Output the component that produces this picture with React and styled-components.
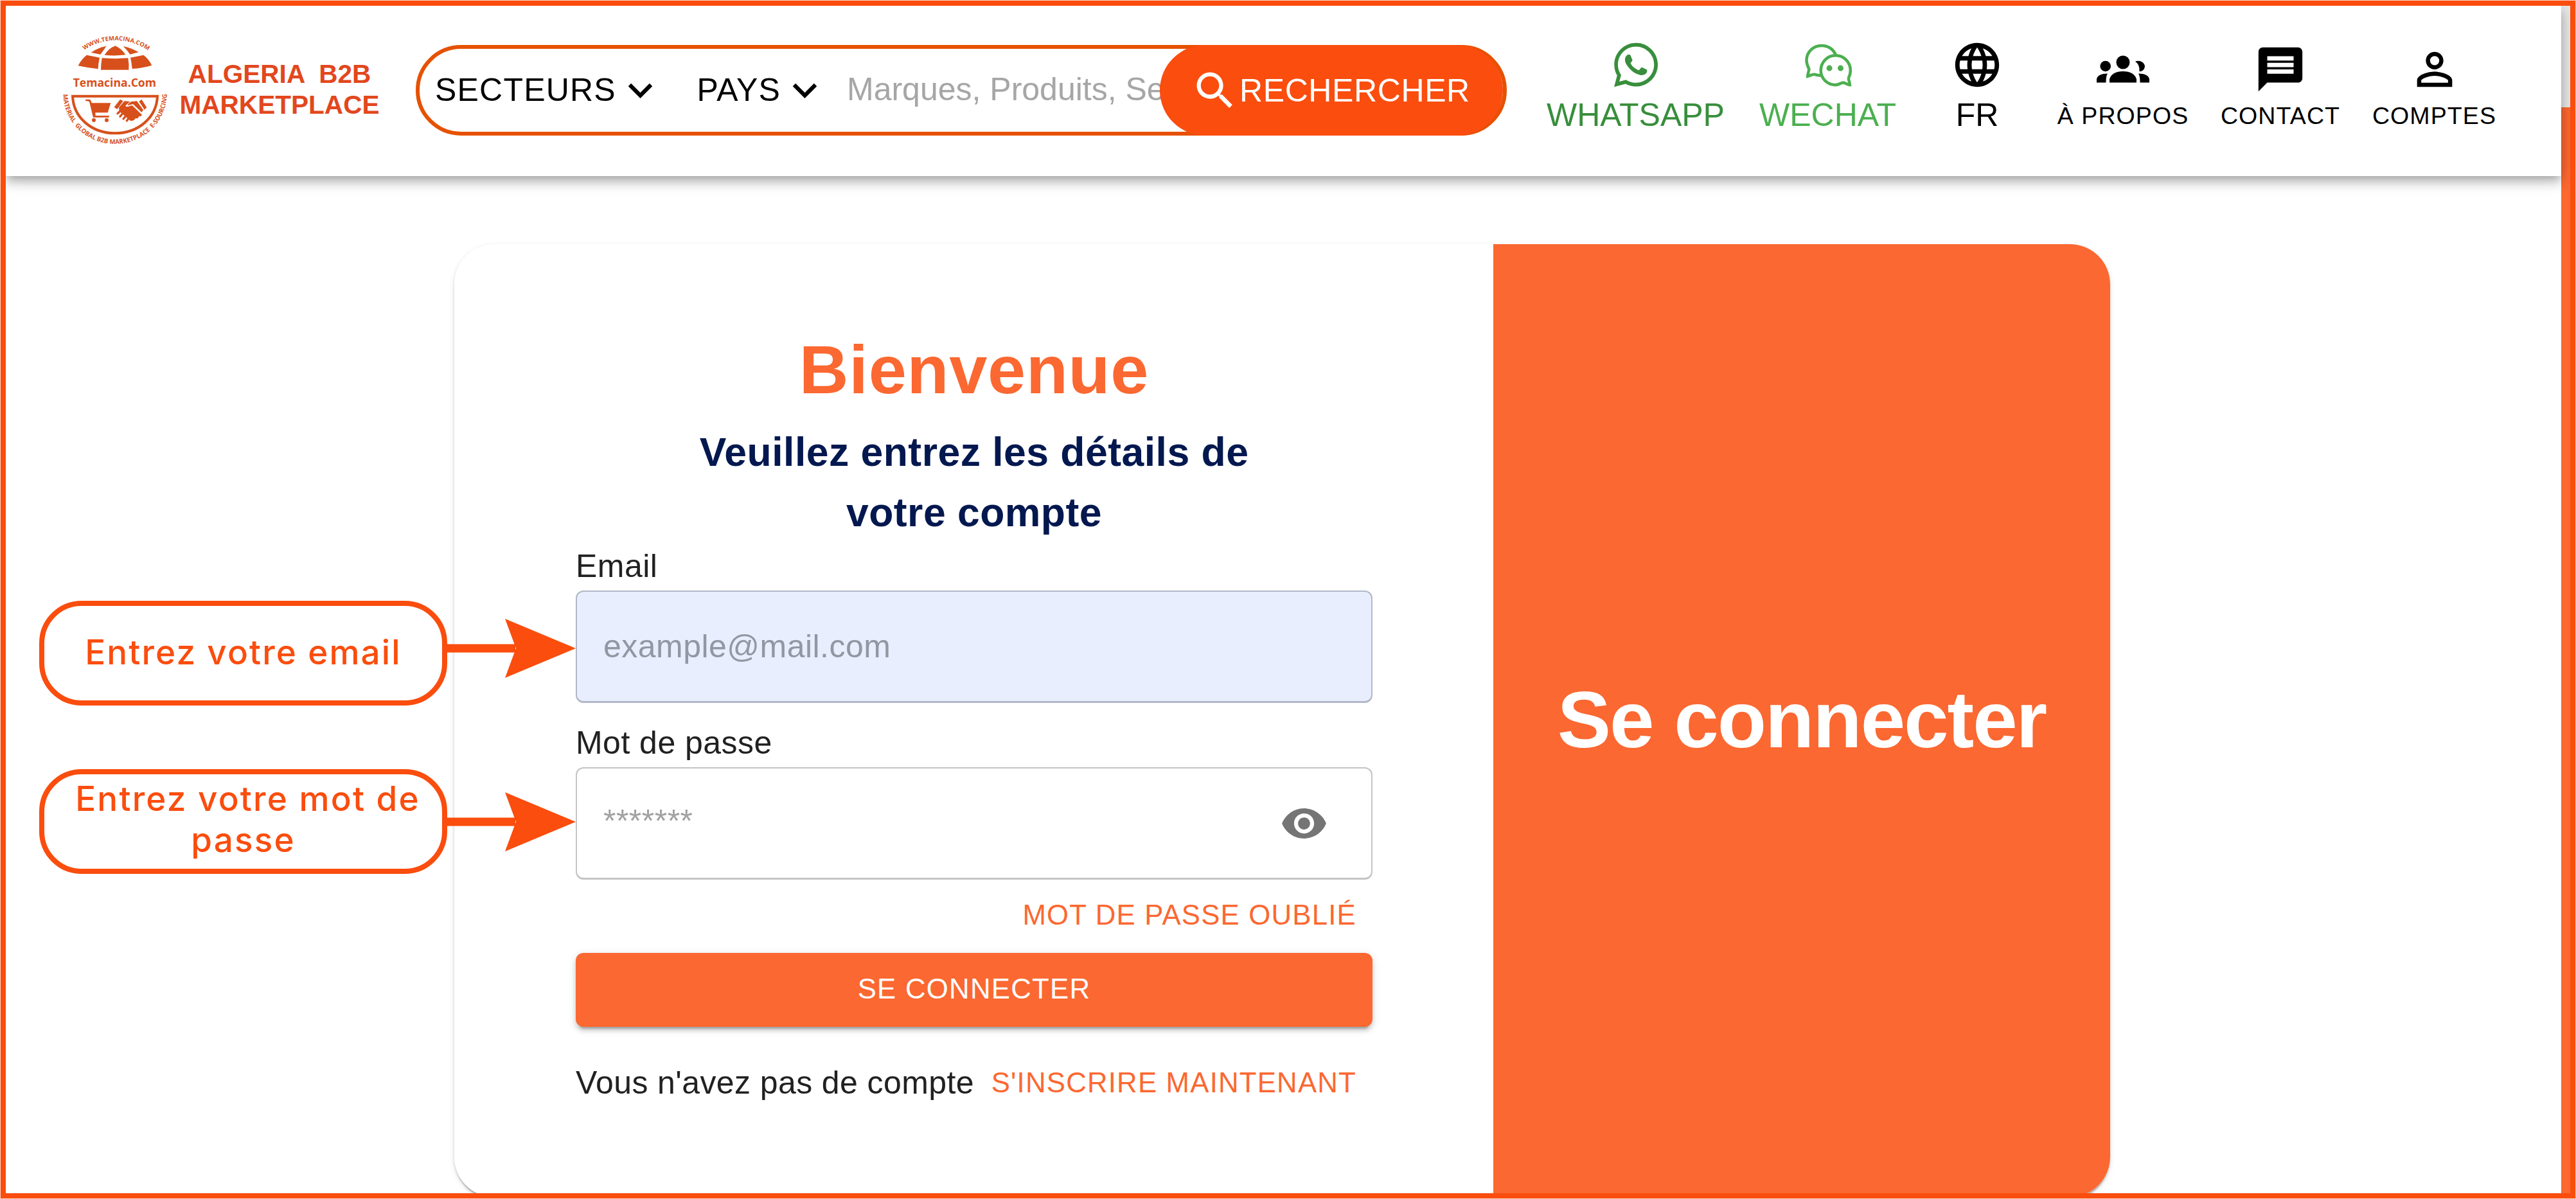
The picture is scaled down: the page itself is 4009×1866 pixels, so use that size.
import React from "react";
import styled, { createGlobalStyle } from "styled-components";
import {
  MdKeyboardArrowDown,
  MdSearch,
  MdWhatsapp,
  MdLanguage,
  MdMessage,
  MdPersonOutline,
  MdVisibility,
} from "react-icons/md";

const ACCENT = "#fa4d0e";
const ORANGE = "#fb6831";
const LOGO = "#d7501b";

const GlobalStyle = createGlobalStyle`
  *, *::before, *::after { box-sizing: border-box; }
  html, body { margin: 0; padding: 0; overflow: hidden; }
  body { font-family: "Liberation Sans", Arial, sans-serif; background: #fff; }
  button, input { font-family: inherit; margin: 0; }
  svg { display: block; flex: none; }
`;

const Page = styled.div`
  width: 4009px;
  height: 1866px;
  padding: 1px;
  background: #fdd5c6;
`;

const Frame = styled.div`
  display: flex;
  width: 4007px;
  height: 1864px;
  border: 8px solid ${ACCENT};
  background: #fff;
  overflow: hidden;
`;

const Main = styled.main`
  position: relative;
  display: flex;
  flex-direction: column;
  width: 3977px;
  height: 1848px;
`;

const ScrollTrack = styled.div`
  width: 14px;
  padding-top: 158px;
  background: #e6e6e6;
`;

const ScrollThumb = styled.div`
  height: 1690px;
  background: ${ORANGE};
`;

const Header = styled.header`
  position: relative;
  display: flex;
  align-items: center;
  flex: none;
  height: 265px;
  background: #fff;
  box-shadow:
    0 6px 12px -3px rgba(0, 0, 0, 0.2),
    0 12px 15px 0 rgba(0, 0, 0, 0.14),
    0 3px 31px 0 rgba(0, 0, 0, 0.12);
`;

const Brand = styled.a`
  display: flex;
  align-items: center;
  width: 638px;
  padding: 0 0 3px 86px;
`;

const BrandName = styled.span`
  display: flex;
  flex-direction: column;
  align-items: center;
  width: 330px;
  margin-left: 5px;
  padding-bottom: 2px;
  font-size: 40.6px;
  line-height: 48.5px;
  font-weight: 700;
  white-space: pre;
  color: #e2471d;
`;

const SearchBar = styled.div`
  display: flex;
  align-items: center;
  width: 1698px;
  height: 141px;
  margin-top: -2px;
  border: 6px solid #e65100;
  border-radius: 71px;
  background: #fff;
`;

const Filter = styled.button`
  display: flex;
  align-items: center;
  width: ${(p) => p.$w}px;
  padding: 0 0 0 24px;
  border: 0;
  background: none;
  font-size: 50px;
  line-height: 75px;
  letter-spacing: 1.2px;
  color: #000;
`;

const Query = styled.input`
  width: 500px;
  height: 75px;
  padding: 0 0 3px;
  border: 0;
  outline: 0;
  font-size: 50px;
  background: none;

  &::placeholder {
    color: #a6a6a6;
    opacity: 1;
  }
`;

const SearchButton = styled.button`
  position: relative;
  display: flex;
  align-items: center;
  flex: none;
  width: 534px;
  height: 141px;
  margin-left: -13px;
  padding: 0 0 0 48px;
  border: 0;
  border-radius: 71px;
  background: ${ACCENT};
  font-size: 50px;
  letter-spacing: 0.6px;
  color: #fff;
`;

const Nav = styled.nav`
  display: flex;
  align-items: center;
  margin-left: 34px;
  padding-bottom: 6px;
`;

const NavItem = styled.a`
  display: flex;
  flex-direction: column;
  align-items: center;
  width: ${(p) => p.$w}px;
  font-size: ${(p) => (p.$small ? 37.5 : 50)}px;
  line-height: ${(p) => (p.$small ? 62 : 75)}px;
  letter-spacing: ${(p) => p.$track || 0}px;
  white-space: nowrap;
  color: ${(p) => p.$color || "#000"};
`;

const Card = styled.section`
  display: flex;
  width: 2577px;
  height: 1483px;
  border-radius: 62.5px;
  overflow: hidden;
  background: #fff;
`;

const CardShadow = styled.div`
  flex: none;
  width: 2577px;
  height: 1483px;
  margin: 106px 0 0 698px;
  border-radius: 62.5px;
  box-shadow:
    0 6px 3px -3px rgba(0, 0, 0, 0.2),
    0 3px 3px 0 rgba(0, 0, 0, 0.14),
    0 3px 9px 0 rgba(0, 0, 0, 0.12);
`;

const FormPane = styled.form`
  display: flex;
  flex-direction: column;
  width: 1617px;
  padding: 130px 188px 0 189px;
`;

const Welcome = styled.h1`
  margin: 0 0 15px;
  text-align: center;
  font-size: 106.25px;
  line-height: 131px;
  letter-spacing: 0.78px;
  color: ${ORANGE};
`;

const Intro = styled.h2`
  width: 900px;
  margin: 0 auto;
  text-align: center;
  font-size: 62.5px;
  line-height: 94px;
  letter-spacing: 0.47px;
  color: #03184f;
`;

const Label = styled.label`
  height: 75px;
  margin-top: ${(p) => p.$gap || 0}px;
  font-size: 50px;
  line-height: 75px;
  letter-spacing: 0.47px;
  color: #212121;
`;

const Field = styled.div`
  display: flex;
  align-items: center;
  height: 175px;
  padding: 0 67px 0 41px;
  border: 2px solid ${(p) => (p.$filled ? "#b1b8c6" : "#c4c4c4")};
  border-bottom-width: 3px;
  border-radius: 12px;
  background: ${(p) => (p.$filled ? "#e8eefd" : "#fff")};
`;

const Input = styled.input`
  flex: 1;
  min-width: 0;
  height: 75px;
  padding: 0 0 ${(p) => p.$lift || 0}px;
  border: 0;
  outline: 0;
  background: none;
  font-size: 50px;
  letter-spacing: 0.47px;

  &::placeholder {
    color: ${(p) => p.$hint};
    opacity: 1;
  }
`;

const TextLink = styled.a`
  padding-right: 25px;
  font-size: 43.75px;
  line-height: 76px;
  letter-spacing: 1.2px;
  white-space: nowrap;
  color: ${ORANGE};
`;

const ForgotRow = styled.div`
  display: flex;
  justify-content: flex-end;
  height: 114px;
  padding-top: 17px;
`;

const Submit = styled.button`
  height: 115px;
  padding: 0 0 3px;
  border: 0;
  border-radius: 12px;
  background: ${ORANGE};
  box-shadow:
    0 9px 3px -6px rgba(0, 0, 0, 0.2),
    0 6px 6px 0 rgba(0, 0, 0, 0.14),
    0 3px 15px 0 rgba(0, 0, 0, 0.12);
  font-size: 43.75px;
  letter-spacing: 1.25px;
  color: #fff;
`;

const SignupRow = styled.div`
  display: flex;
  align-items: center;
  justify-content: space-between;
  margin-top: 49px;
`;

const SignupText = styled.span`
  font-size: 50px;
  line-height: 76px;
  letter-spacing: 0.4px;
  white-space: nowrap;
  color: #212121;
`;

const SidePane = styled.aside`
  display: flex;
  justify-content: center;
  width: 960px;
  padding-top: 667px;
  background: ${ORANGE};
`;

const SideTitle = styled.h2`
  margin: 0;
  font-size: 125px;
  line-height: 146px;
  letter-spacing: -2.05px;
  white-space: nowrap;
  color: #fff;
`;

const Callout = styled.div`
  position: absolute;
  left: 52px;
  top: ${(p) => p.$top}px;
  display: flex;
  align-items: flex-start;
`;

const Bubble = styled.div`
  display: flex;
  align-items: center;
  justify-content: center;
  width: 635px;
  height: 163px;
  padding-bottom: ${(p) => p.$lift}px;
  border: 8px solid ${ACCENT};
  border-radius: 66px;
  background: #fff;
  font-family: Inter, "Liberation Sans", sans-serif;
  font-size: 53px;
  font-weight: 500;
  line-height: 64px;
  letter-spacing: ${(p) => p.$track}px;
  white-space: nowrap;
  text-align: center;
  text-indent: ${(p) => p.$indent || 0}px;
  color: ${ACCENT};
`;

const Arrow = styled.svg`
  margin: ${(p) => p.$drop}px 0 0 -1px;
  fill: ${ACCENT};
`;

function Logo() {
  return (
    <svg width="170" height="180" viewBox="0 0 510 540" fill={LOGO}>
      <defs>
        <path id="logo-top" d="M108 84 A262 262 0 0 1 410 88" />
        <path id="logo-bottom" d="M10 290 A242 234 0 0 0 494 286" />
      </defs>
      <g fontFamily="Open Sans, sans-serif" fontWeight="700">
        <text fontSize="28" textLength="318" lengthAdjust="spacingAndGlyphs">
          <textPath href="#logo-top">WWW.TEMACINA.COM</textPath>
        </text>
        <text x="56" y="256" fontSize="53" textLength="388" lengthAdjust="spacingAndGlyphs">
          Temacina.Com
        </text>
        <text fontSize="30" xmlSpace="preserve" textLength="744" lengthAdjust="spacingAndGlyphs">
          <textPath href="#logo-bottom">{"MATERIAL \u00a0GLOBAL B2B MARKETPLACE \u00a0E-SOURCING"}</textPath>
        </text>
      </g>
      <path d="M140 95 Q172 72 212 65 Q200 82 184 104 Z" />
      <path d="M203 107 Q222 76 253 64 Q284 78 301 106 Q252 112 203 107 Z" />
      <path d="M290 66 Q330 74 362 94 L322 104 Q308 82 290 66 Z" />
      <path d="M120 107 L180 119 Q174 145 173 172 Q125 167 80 157 Q95 126 120 107 Z" />
      <path d="M191 121 Q252 126 313 121 Q318 150 316 176 H186 Q186 150 191 121 Z" />
      <path d="M324 119 L385 107 Q408 124 424 155 Q380 168 332 171 Q330 145 324 119 Z" />
      <path
        d="M54 299 H450 C446 400 360 472 252 472 C144 472 58 400 54 299 Z"
        fill="none"
        stroke={LOGO}
        strokeWidth="12"
      />
      <path d="M114 314 H134 Q138 316 140 322 L143 331 H232 L218 376 H160 L161 390 H224 V398 H150 L132 324 L114 320 Z" />
      <circle cx="153" cy="411" r="9" />
      <circle cx="213" cy="411" r="9" />
      <path d="M276 314 L290 322 L262 360 L248 350 Z" />
      <path d="M376 314 L400 352 L390 362 L364 324 Z" />
      <path d="M296 322 L322 324 L300 344 Q306 352 322 344 L332 342 L378 386 Q374 396 364 392 Q360 406 348 402 Q340 416 324 414 L272 370 L270 352 Z" />
      <path d="M328 324 L354 322 L384 364 L376 374 L336 336 L312 342 Q308 336 328 324 Z" />
      <g stroke={LOGO} strokeWidth="10" strokeLinecap="round">
        <path d="M264 380 L272 372" />
        <path d="M276 394 L284 384" />
        <path d="M291 405 L299 395" />
        <path d="M307 414 L313 406" />
      </g>
    </svg>
  );
}

function WechatIcon() {
  return (
    <svg width="82" height="82" viewBox="0 0 24 24" fill="none" stroke="currentColor" strokeWidth="1.35">
      <path d="M15.5 7.6 C14.6 4.9 12 3.2 9 3.2 C5.2 3.2 2.2 6.2 2.2 9.9 C2.2 11.7 2.9 13 3.3 13.8 C3.3 15.2 2.7 16 2.7 17.2 C4 16.9 4.6 16.3 5.6 16.3 C6.5 16.3 7.2 16.9 8.7 16.8" />
      <path d="M21.9 21.1 C21.8 19.5 21.1 18.6 21.4 17.8 C22 16.7 22.2 15.7 22.2 14.6 C22.2 10.7 19.2 7.7 15.4 7.7 C11.7 7.7 8.7 10.7 8.7 14.5 C8.7 18.3 11.7 21.1 15.3 21.1 C17 21.1 17.8 20.1 18.9 20.1 C19.900 20.1 20.7 21.1 21.9 21.1 Z" />
      <circle cx="12.600" cy="13.500" r="0.650" fill="currentColor" />
      <circle cx="17.700" cy="13.500" r="0.650" fill="currentColor" />
    </svg>
  );
}

function PeopleIcon() {
  return (
    <svg width="82" height="82" viewBox="0 0 82 82" fill="currentColor">
      <ellipse cx="13.7" cy="36" rx="8.3" ry="8.3" />
      <ellipse cx="41" cy="30" rx="10.5" ry="10.5" />
      <path d="M60 28.5 Q67 26.500 71.5 30 Q75 33 75 36.5 Q74 44 66.5 44.3 Q67.5 34 60 28.5 Z" />
      <path d="M0 61.5 V56 Q2 47.5 17 47.5 Q14.5 51 14.5 61.5 Z" />
      <path d="M20 61.5 V56 Q24 44 41 44 Q58 44 62 56 V61.5 Z" />
      <path d="M82 61.5 V56 Q80 47.5 65 47.5 Q67.5 51 67.5 61.5 Z" />
    </svg>
  );
}

function CalloutArrow({ drop }) {
  return (
    <Arrow $drop={drop} width="201" height="94" viewBox="0 0 201 94">
      <path d="M0 40.5 H107 V53.5 H0 Z" />
      <path d="M91 1 L201 47 L91 93 L108 47 Z" />
    </Arrow>
  );
}

export default function App() {
  return (
    <Page>
      <GlobalStyle />
      <Frame>
        <Main>
          <Header>
            <Brand>
              <Logo />
              <BrandName>
                <span>{"ALGERIA  B2B"}</span>
                <span>MARKETPLACE</span>
              </BrandName>
            </Brand>
            <SearchBar>
              <Filter $w={408} type="button">
                SECTEURS
                <MdKeyboardArrowDown size={75} />
              </Filter>
              <Filter $w={258} type="button">
                PAYS
                <MdKeyboardArrowDown size={75} />
              </Filter>
              <Query placeholder="Marques, Produits, Services" />
              <SearchButton type="button">
                <MdSearch size={76} />
                RECHERCHER
              </SearchButton>
            </SearchBar>
            <Nav>
              <NavItem $w={333} $color="#388e3c">
                <MdWhatsapp size={82} />
                WHATSAPP
              </NavItem>
              <NavItem $w={265} $color="#4caf50">
                <WechatIcon />
                WECHAT
              </NavItem>
              <NavItem $w={200}>
                <MdLanguage size={82} />
                FR
              </NavItem>
              <NavItem $w={254} $small $track={1.1}>
                <PeopleIcon />À PROPOS
              </NavItem>
              <NavItem $w={236} $small $track={1.1}>
                <MdMessage size={82} />
                CONTACT
              </NavItem>
              <NavItem $w={243} $small $track={1.1}>
                <MdPersonOutline size={82} />
                COMPTES
              </NavItem>
            </Nav>
          </Header>

          <CardShadow>
            <Card>
              <FormPane>
                <Welcome>Bienvenue</Welcome>
                <Intro>Veuillez entrez les détails de votre compte</Intro>
                <Label>Email</Label>
                <Field $filled>
                  <Input $hint="#9298a3" placeholder="example@mail.com" />
                </Field>
                <Label $gap={25}>Mot de passe</Label>
                <Field>
                  <Input $hint="#a2a2a2" $lift={7} placeholder="*******" />
                  <MdVisibility size={75} color="#757575" />
                </Field>
                <ForgotRow>
                  <TextLink>MOT DE PASSE OUBLIÉ</TextLink>
                </ForgotRow>
                <Submit type="button">SE CONNECTER</Submit>
                <SignupRow>
                  <SignupText>Vous n'avez pas de compte</SignupText>
                  <TextLink>S'INSCRIRE MAINTENANT</TextLink>
                </SignupRow>
              </FormPane>
              <SidePane>
                <SideTitle>Se connecter</SideTitle>
              </SidePane>
            </Card>
          </CardShadow>

          <Callout $top={926}>
            <Bubble $lift={4} $track={2.1}>
              Entrez votre email
            </Bubble>
            <CalloutArrow drop={27} />
          </Callout>
          <Callout $top={1188}>
            <Bubble $lift={7} $track={2.2} $indent={14}>
              Entrez votre mot de
              <br />
              passe
            </Bubble>
            <CalloutArrow drop={35} />
          </Callout>
        </Main>
        <ScrollTrack>
          <ScrollThumb />
        </ScrollTrack>
      </Frame>
    </Page>
  );
}
